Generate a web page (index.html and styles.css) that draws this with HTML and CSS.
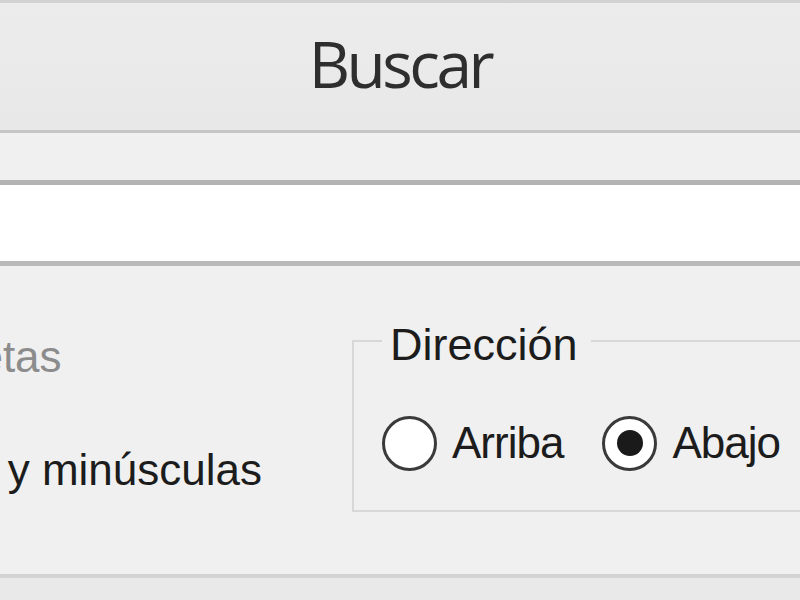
FILE: index.html
```html
<!DOCTYPE html>
<html lang="es">
<head>
    <meta charset="UTF-8">
    <meta name="viewport" content="width=device-width, initial-scale=1.0">
    <title>Buscar</title>
    <link rel="stylesheet" href="styles.css">
</head>
<body>
    <div class="dialog">
        <div class="find-button">Buscar</div>

        <div class="search-box"></div>

        <div class="options">
            <div class="checks">
                <div class="check-list">
                    <div class="check-label disabled">Sólo palabras completas</div>
                    <div class="check-label">Coincidir mayúsculas y minúsculas</div>
                </div>
            </div>

            <fieldset class="direction">
                <legend>Dirección</legend>
                <div class="radios">
                    <span class="radio"></span>
                    <span class="radio-text">Arriba</span>
                    <span class="radio checked"></span>
                    <span class="radio-text">Abajo</span>
                </div>
            </fieldset>
        </div>

        <div class="footer"></div>
    </div>
</body>
</html>
```

FILE: styles.css
```css
body {
    margin: 0;
    padding: 0;
    background-color: #f0f0f0;
    font-family: "Liberation Sans", Arial, sans-serif;
    color: #1c1c1c;
    overflow: hidden;
    height: 600px;
}

.dialog {
    display: flex;
    flex-direction: column;
    height: 600px;
}

.find-button {
    height: 133px;
    box-sizing: border-box;
    border-top: 3px solid #d2d2d2;
    border-bottom: 3px solid #c6c6c6;
    background: linear-gradient(#ececec, #e8e8e8);
    display: flex;
    justify-content: center;
    align-items: center;
    padding-bottom: 6px;
    font-family: "Open Sans", "Noto Sans", sans-serif;
    font-size: 64px;
    letter-spacing: -3.5px;
    color: #2e2e2e;
}

.search-box {
    margin-top: 47px;
    height: 76px;
    background-color: #ffffff;
    border-top: 5px solid #b4b4b4;
    border-bottom: 5px solid #b9b9b9;
}

.options {
    display: flex;
    align-items: flex-start;
}

.checks {
    width: 262px;
    flex-shrink: 0;
    display: flex;
    justify-content: flex-end;
    padding-top: 66px;
}

.check-list {
    display: flex;
    flex-direction: column;
    align-items: flex-start;
    gap: 63px;
}

.check-label {
    font-size: 44px;
    line-height: 50px;
    white-space: nowrap;
}

.check-label.disabled {
    color: #8c8c8c;
}

.direction {
    margin: 46px 0 0 90px;
    padding: 0 0 39px 28px;
    border: 2px solid #d8d8d8;
    border-right: none;
    flex: 1;
}

.direction legend {
    font-size: 45px;
    line-height: 50px;
    padding: 8px 13px 0 8px;
}

.radios {
    margin-top: 45px;
    display: flex;
    align-items: center;
    height: 56px;
    font-size: 44px;
    letter-spacing: -1px;
}

.radio {
    width: 49px;
    height: 49px;
    border: 3px solid #3a3a3a;
    border-radius: 50%;
    background-color: #ffffff;
    flex-shrink: 0;
    display: flex;
    justify-content: center;
    align-items: center;
}

.radio.checked::after {
    content: "";
    width: 26px;
    height: 26px;
    border-radius: 50%;
    background-color: #1a1a1a;
}

.radio-text {
    margin-left: 15px;
    margin-right: 39px;
}

.footer {
    margin-top: auto;
    height: 22px;
    border-top: 4px solid #d3d3d3;
    background-color: #e9e9e9;
}
```
